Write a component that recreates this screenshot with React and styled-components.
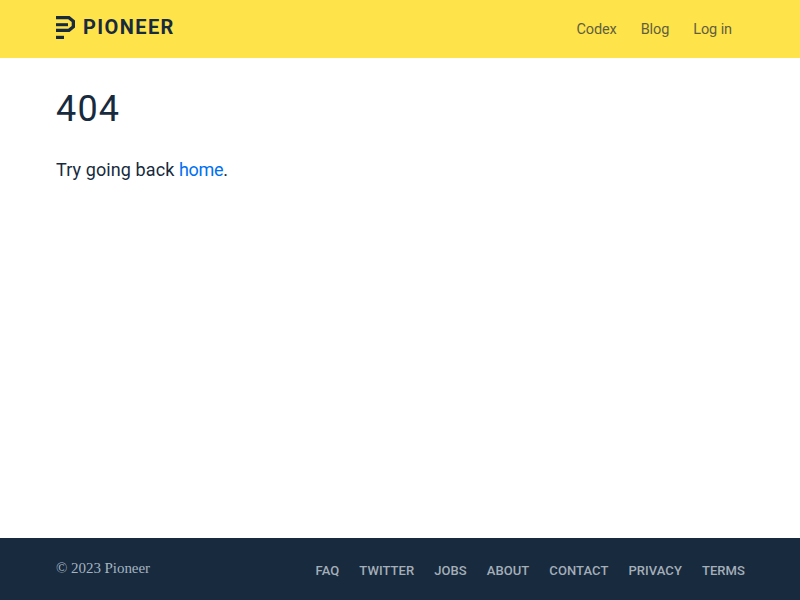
import React from 'react';
import styled, { createGlobalStyle } from 'styled-components';

const GlobalStyle = createGlobalStyle`
  html, body {
    margin: 0;
    padding: 0;
    height: 100%;
    background: #fff;
    font-family: Roboto, "Liberation Sans", sans-serif;
  }
  #root {
    height: 100%;
  }
`;

const Page = styled.div`
  height: 600px;
  display: grid;
  grid-template-rows: 58px 1fr 62px;
`;

const Header = styled.header`
  background: #ffe34a;
  display: flex;
  align-items: center;
  justify-content: space-between;
  padding: 0 68px 0 56px;
`;

const Logo = styled.a`
  display: flex;
  align-items: center;
  gap: 8px;
  color: #172a3e;
  font-size: 20px;
  font-weight: 700;
  letter-spacing: 1.4px;
  text-decoration: none;
  padding-bottom: 4px;
`;

const HeaderNav = styled.nav`
  display: flex;
  gap: 24px;
`;

const HeaderLink = styled.a`
  color: #5f5f3f;
  font-size: 14.5px;
  letter-spacing: -0.1px;
  text-decoration: none;
`;

const Main = styled.main`
  padding: 29px 56px 0;
  color: #172a3e;
`;

const Title = styled.h1`
  margin: 0 0 27px;
  font-size: 36px;
  font-weight: 400;
  line-height: 44px;
  letter-spacing: 1.2px;
`;

const Text = styled.p`
  margin: 0;
  font-size: 18px;
  line-height: 24px;
  letter-spacing: 0.1px;
`;

const HomeLink = styled.a`
  color: #0070f3;
  letter-spacing: -0.3px;
  text-decoration: none;
`;

const Footer = styled.footer`
  background: #172a3e;
  display: flex;
  align-items: center;
  justify-content: space-between;
  padding: 0 55px 0 56px;
`;

const Copyright = styled.span`
  color: #a5b3c0;
  font-family: "Liberation Serif", serif;
  font-size: 15px;
  letter-spacing: -0.05px;
  padding-bottom: 2px;
`;

const FooterNav = styled.nav`
  display: flex;
  gap: 20px;
  padding-top: 2px;
`;

const FooterLink = styled.a`
  color: #a4aeb8;
  font-size: 13px;
  font-weight: 500;
  letter-spacing: 0.07px;
  text-decoration: none;
`;

const LogoMark = () => (
  <svg width="19" height="23" viewBox="0 0 19 23" fill="#172a3e" aria-hidden="true">
    <path d="M0 0h13.5l5.5 4.5v7L13.5 16H0v-3.2h12.2l3.5-2.7V5.9l-3.5-2.7H0z" />
    <rect x="0" y="7.2" width="12" height="3" />
    <rect x="0" y="19.8" width="8" height="3.2" />
  </svg>
);

const footerLinks = ['FAQ', 'TWITTER', 'JOBS', 'ABOUT', 'CONTACT', 'PRIVACY', 'TERMS'];

export default function App() {
  return (
    <Page>
      <GlobalStyle />
      <Header>
        <Logo href="#">
          <LogoMark />
          PIONEER
        </Logo>
        <HeaderNav>
          <HeaderLink href="#">Codex</HeaderLink>
          <HeaderLink href="#">Blog</HeaderLink>
          <HeaderLink href="#">Log in</HeaderLink>
        </HeaderNav>
      </Header>
      <Main>
        <Title>404</Title>
        <Text>
          Try going back <HomeLink href="#">home</HomeLink>.
        </Text>
      </Main>
      <Footer>
        <Copyright>© 2023 Pioneer</Copyright>
        <FooterNav>
          {footerLinks.map(label => (
            <FooterLink href="#" key={label}>{label}</FooterLink>
          ))}
        </FooterNav>
      </Footer>
    </Page>
  );
}
